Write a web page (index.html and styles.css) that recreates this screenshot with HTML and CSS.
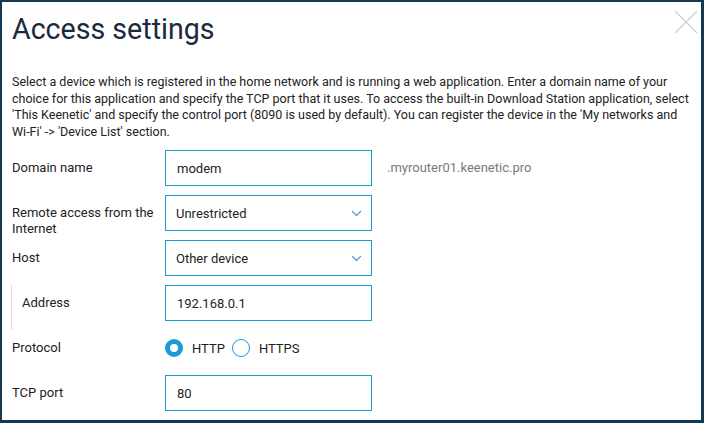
FILE: index.html
```html
<!DOCTYPE html>
<html lang="en">
<head>
    <meta charset="UTF-8">
    <meta name="viewport" content="width=device-width, initial-scale=1.0">
    <title>Access settings</title>
    <link rel="stylesheet" href="styles.css">
</head>
<body>
    <!-- Modal -->
    <div class="modal">
        <button class="modal-close" aria-label="Close">
            <svg width="24" height="24" viewBox="0 0 24 24">
                <path d="M1 1 L23 23 M23 1 L1 23" stroke="#c9ced4" stroke-width="1.2" fill="none"/>
            </svg>
        </button>
        <h1 class="modal-title">Access settings</h1>
        <p class="modal-text">Select a device which is registered in the home network and is running a web application. Enter a domain name of your choice for this application and specify the TCP port that it uses. To access the built-in Download Station application, select 'This Keenetic' and specify the control port (8090 is used by default). You can register the device in the 'My networks and Wi-Fi' -&gt; 'Device List' section.</p>

        <!-- Form -->
        <div class="form">
            <div class="form-row">
                <label class="form-label">Domain name</label>
                <div class="form-field">
                    <input class="text-input" type="text" value="modem">
                </div>
                <span class="form-suffix">.myrouter01.keenetic.pro</span>
            </div>
            <div class="form-row">
                <label class="form-label">Remote access from the Internet</label>
                <div class="form-field select">
                    <span>Unrestricted</span>
                    <svg class="chevron" width="11" height="7" viewBox="0 0 11 7"><path d="M1 1 L5.5 5.5 L10 1" stroke="#6a9bd3" stroke-width="1.4" fill="none"/></svg>
                </div>
            </div>
            <div class="form-row">
                <label class="form-label">Host</label>
                <div class="form-field select">
                    <span>Other device</span>
                    <svg class="chevron" width="11" height="7" viewBox="0 0 11 7"><path d="M1 1 L5.5 5.5 L10 1" stroke="#6a9bd3" stroke-width="1.4" fill="none"/></svg>
                </div>
            </div>
            <div class="form-row sub-row">
                <label class="form-label">Address</label>
                <div class="form-field">
                    <input class="text-input" type="text" value="192.168.0.1">
                </div>
            </div>
            <div class="form-row">
                <label class="form-label">Protocol</label>
                <div class="radio-group">
                    <span class="radio checked"></span><span class="radio-label">HTTP</span>
                    <span class="radio"></span><span class="radio-label">HTTPS</span>
                </div>
            </div>
            <div class="form-row">
                <label class="form-label">TCP port</label>
                <div class="form-field">
                    <input class="text-input" type="text" value="80">
                </div>
            </div>
        </div>
    </div>
</body>
</html>
```

FILE: styles.css
```css
/* Global Styling */
body {
    margin: 0;
    background-color: #133a52;
    font-family: Roboto, "Liberation Sans", sans-serif;
    color: #222;
}
/* Modal */
.modal {
    position: relative;
    margin: 2px 3px 0 2px;
    height: 418px;
    background-color: #fff;
    padding: 0 10px;
    overflow: hidden;
}
.modal-close {
    position: absolute;
    top: 8px;
    right: 3px;
    padding: 0;
    border: none;
    background: none;
    cursor: pointer;
}
.modal-close svg {
    display: block;
}
.modal-title {
    margin: 0;
    padding-top: 7px;
    font-size: 28.6px;
    font-weight: 400;
    line-height: 40px;
    color: #1b2a3c;
}
.modal-text {
    margin: 25px 0 10px;
    font-size: 12.5px;
    line-height: 16.5px;
    color: #222;
}
/* Form */
.form {
    display: flex;
    flex-direction: column;
}
.form-row {
    display: flex;
    align-items: flex-start;
    height: 36px;
    padding-bottom: 9px;
}
.form-label {
    width: 153px;
    flex-shrink: 0;
    padding-top: 10px;
    font-size: 13px;
    line-height: 16px;
}
.form-field {
    width: 207px;
    height: 36px;
    box-sizing: border-box;
    border: 1px solid #1b9ad6;
    display: flex;
    align-items: center;
}
.text-input {
    width: 100%;
    border: none;
    outline: none;
    padding: 0 11px;
    font-family: inherit;
    font-size: 13px;
    color: #222;
    background: none;
}
.select {
    justify-content: space-between;
    padding: 0 9px 0 10px;
    font-size: 13px;
}
.form-suffix {
    margin-left: 15px;
    padding-top: 10px;
    font-size: 13px;
    line-height: 16px;
    color: #777b80;
}
/* Nested address row */
.sub-row {
    margin-left: -1px;
    border-left: 1px solid #dcdde0;
}
.sub-row .form-label {
    width: 143px;
    padding-left: 10px;
}
/* Radio buttons */
.radio-group {
    display: flex;
    align-items: center;
    height: 36px;
    font-size: 13px;
}
.radio {
    width: 18px;
    height: 18px;
    box-sizing: border-box;
    border-radius: 50%;
    border: 1px solid #1b9ad6;
}
.radio.checked {
    border: 5px solid #1b9ad6;
}
.radio-label {
    margin: 0 7px 0 9px;
}
```
